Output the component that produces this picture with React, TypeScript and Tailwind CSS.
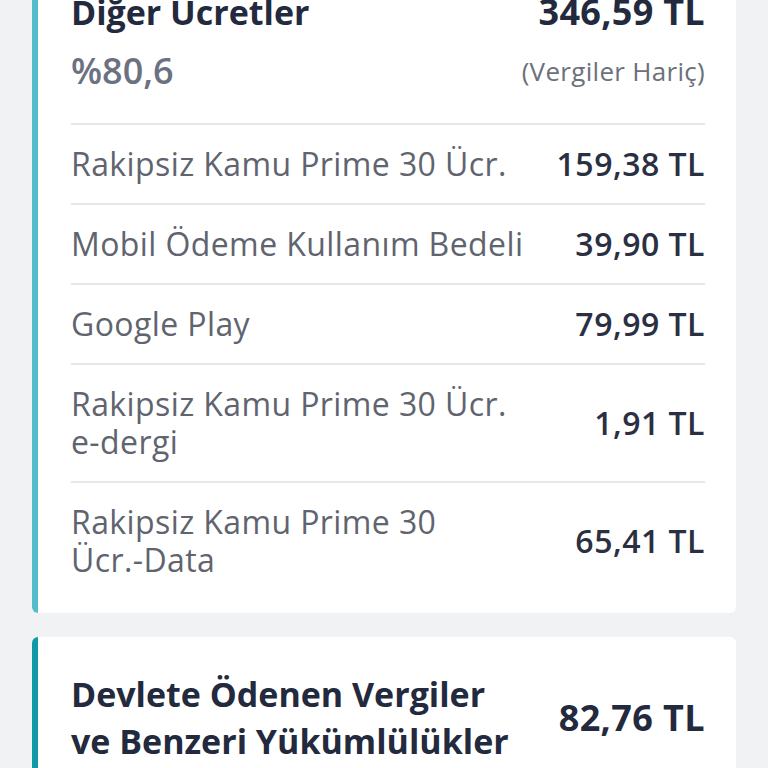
import React from "react";

const rows: { label: string[]; amount: string }[] = [
  { label: ["Rakipsiz Kamu Prime 30 Ücr."], amount: "159,38 TL" },
  { label: ["Mobil Ödeme Kullanım Bedeli"], amount: "39,90 TL" },
  { label: ["Google Play"], amount: "79,99 TL" },
  { label: ["Rakipsiz Kamu Prime 30 Ücr.", "e-dergi"], amount: "1,91 TL" },
  { label: ["Rakipsiz Kamu Prime 30", "Ücr.-Data"], amount: "65,41 TL" },
];

export default function App() {
  return (
    <div
      className="min-h-[768px] w-[768px] overflow-hidden bg-[#f1f2f4]"
      style={{ fontFamily: '"Open Sans", "Noto Sans", sans-serif' }}
    >
      <div className="mt-[-48px] flex flex-col gap-6 pl-8 pr-8">
        <div className="flex rounded-md bg-white overflow-hidden">
          <div className="w-[6px] shrink-0 bg-[#55bccb]" />
          <div className="flex-1 pl-[33px] pr-[31px] pt-[38px]">
            <div className="flex h-[44px] items-center justify-between text-[#232a3e]">
              <span className="text-[34px] font-bold leading-[44px]">Diğer Ücretler</span>
              <span className="text-[36px] font-bold leading-[44px] tracking-[0.3px]">346,59 TL</span>
            </div>
            <div className="mt-[15px] flex h-[44px] items-center justify-between">
              <span className="text-[36px] font-semibold leading-[44px] text-[#6c7180]">%80,6</span>
              <span className="text-[26px] leading-[34px] tracking-[0.3px] text-[#6c707b]">(Vergiler Hariç)</span>
            </div>
            <div className="h-[30px]" />
            {rows.map((r, i) => (
              <div
                key={i}
                className="flex items-center justify-between border-t-2 border-[#e7e8eb] py-5"
              >
                <div className="text-[32px] leading-[38px] tracking-[0.4px] text-[#60646f]">
                  {r.label.map((l, j) => (
                    <div key={j}>{l}</div>
                  ))}
                </div>
                <div className="text-[32px] font-semibold leading-[38px] tracking-[0.5px] text-[#2a2f42]">
                  {r.amount}
                </div>
              </div>
            ))}
            <div className="h-[14px]" />
          </div>
        </div>

        <div className="flex rounded-md bg-white overflow-hidden">
          <div className="w-[6px] shrink-0 bg-[#109aa6]" />
          <div className="flex flex-1 items-center justify-between pl-[33px] pr-[31px] pt-[34px] pb-9">
            <div className="text-[34px] font-bold leading-[47px] text-[#232a3e]">
              <div>Devlete Ödenen Vergiler</div>
              <div>ve Benzeri Yükümlülükler</div>
            </div>
            <div className="text-[36px] font-bold tracking-[0.4px] text-[#232a3e]">82,76 TL</div>
          </div>
        </div>
      </div>
    </div>
  );
}
